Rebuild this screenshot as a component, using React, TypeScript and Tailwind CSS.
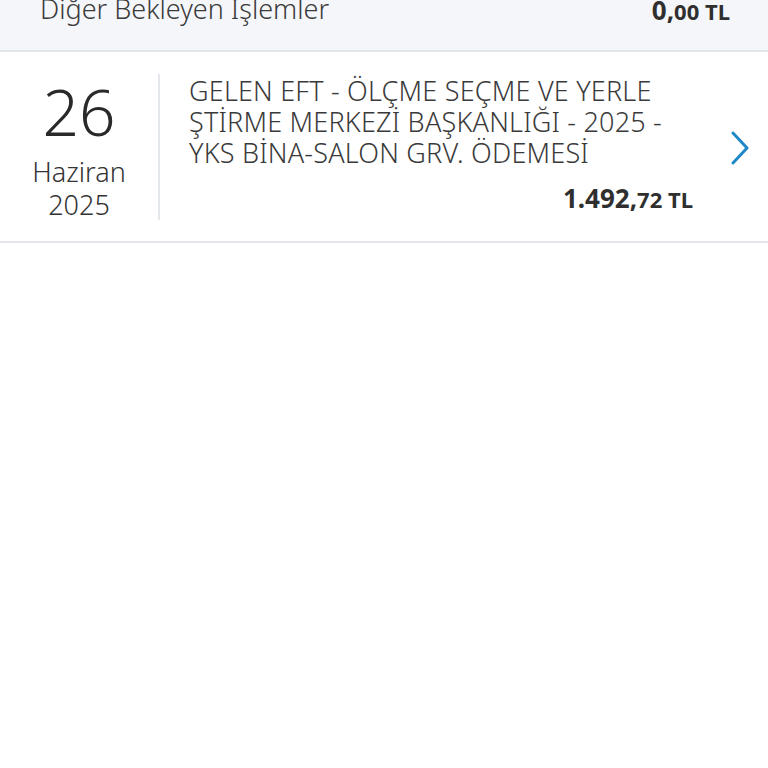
import React from 'react';

const font = { fontFamily: '"Noto Sans", "Open Sans", sans-serif' };

const Chevron: React.FC = () => (
  <svg width="20" height="34" viewBox="0 0 20 34" fill="none">
    <path d="M3 2 L17 17 L3 32" stroke="#1e88c9" strokeWidth="3" strokeLinecap="round" strokeLinejoin="round" />
  </svg>
);

const App: React.FC = () => {
  return (
    <div className="w-[768px] h-[768px] bg-white text-[#333333] overflow-hidden" style={font}>
      <div className="h-[52px] bg-[#f5f6f9] border-b-2 border-[#e2e6ec] flex items-start justify-between pl-[40px] pr-[38px]">
        <span className="text-[27px] leading-[28px] -mt-[5px] font-light text-[#3a3a3a]">Diğer Bekleyen İşlemler</span>
        <span className="font-bold -mt-[4px] leading-[28px] text-[#2f2f2f]">
          <span className="text-[26px]">0,</span>
          <span className="text-[22px]">00 TL</span>
        </span>
      </div>

      <div className="h-[191px] flex items-center border-b-2 border-[#e2e6ec]">
        <div className="w-[158px] flex flex-col items-center pt-[10px]">
          <span className="text-[64px] leading-[60px] font-light text-[#2a2a2a]">26</span>
          <span className="text-[27px] leading-[33px] mt-[13px] font-light">Haziran</span>
          <span className="text-[27px] leading-[33px] font-light">2025</span>
        </div>
        <div className="w-[2px] h-[146px] bg-[#e4e7ec]" />
        <div className="w-[533px] pl-[29px] flex flex-col pt-[2px]">
          <p className="text-[27px] leading-[31px] font-light tracking-[0.2px] text-[#3a3a3a] whitespace-nowrap">
            GELEN EFT - ÖLÇME SEÇME VE YERLE
            <br />
            ŞTİRME MERKEZİ BAŞKANLIĞI - 2025 -
            <br />
            YKS BİNA-SALON GRV. ÖDEMESİ
          </p>
          <div className="self-end mt-[12px] font-bold text-[#2f2f2f] leading-[36px]">
            <span className="text-[26px]">1.492,</span>
            <span className="text-[22px]">72 TL</span>
          </div>
        </div>
        <div className="flex-1 flex justify-start pl-[37px] mt-[2px]">
          <Chevron />
        </div>
      </div>
    </div>
  );
};

export default App;
